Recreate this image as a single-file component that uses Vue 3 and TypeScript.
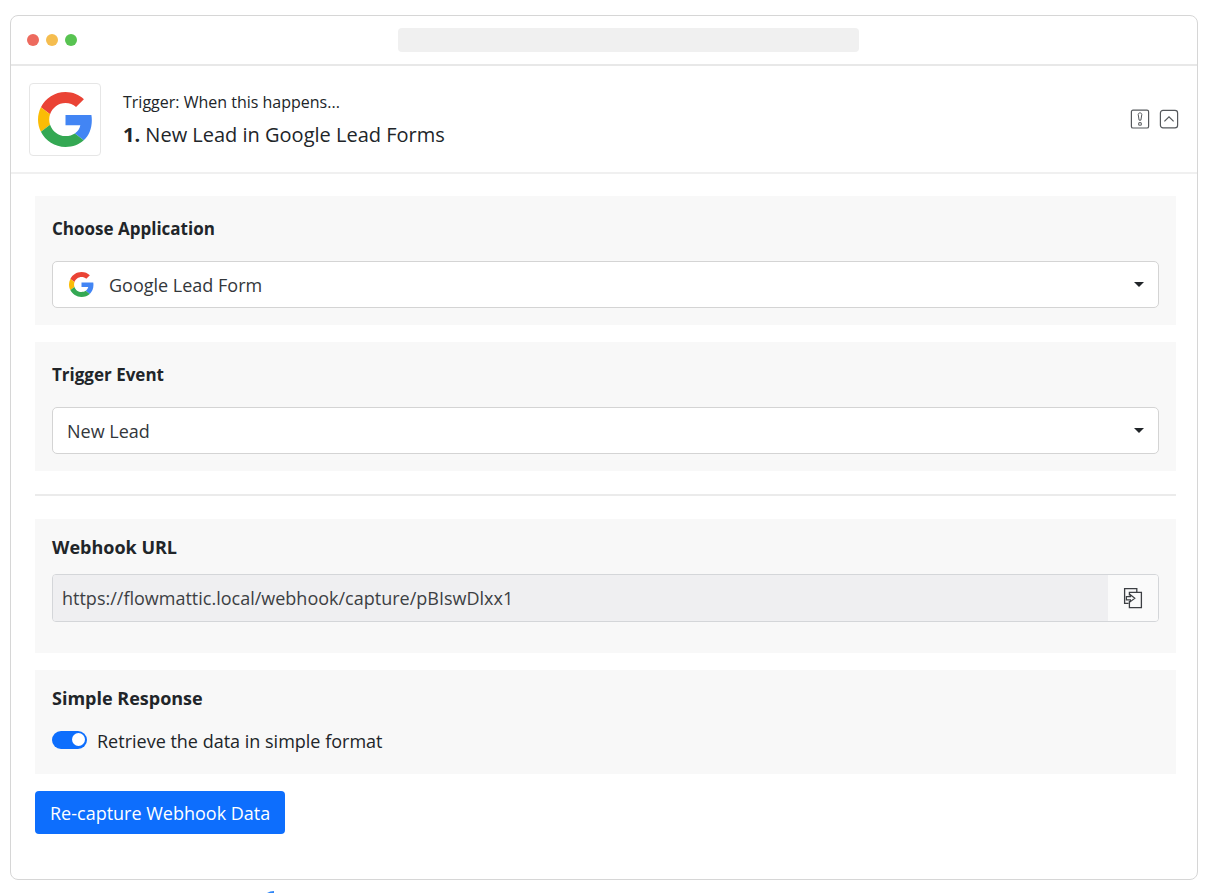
<script setup lang="ts">
import { ref } from 'vue'

const application = ref('Google Lead Form')
const triggerEvent = ref('New Lead')
const webhookUrl = ref('https://flowmattic.local/webhook/capture/pBIswDlxx1')
const simpleResponse = ref(true)
const lights = ['red', 'amber', 'green']
</script>

<template>
  <div class="page">
    <main class="window">
      <div class="titlebar">
        <div class="lights">
          <span v-for="light in lights" :key="light" class="light" :class="light"></span>
        </div>
        <div class="address"></div>
      </div>

      <header class="step">
        <div class="logo">
          <svg viewBox="0 0 48 48" aria-hidden="true">
            <path fill="#ea4335" d="M24 9.5c3.54 0 6.71 1.22 9.21 3.6l6.85-6.85C35.9 2.38 30.47 0 24 0 14.62 0 6.51 5.38 2.56 13.22l7.98 6.19C12.43 13.72 17.74 9.5 24 9.5z" />
            <path fill="#4285f4" d="M46.98 24.55c0-1.57-.15-3.09-.38-4.55H24v9.02h12.94c-.58 2.96-2.26 5.48-4.78 7.18l7.73 6c4.51-4.18 7.09-10.36 7.09-17.65z" />
            <path fill="#fbbc05" d="M10.53 28.59c-.48-1.45-.76-2.99-.76-4.59s.27-3.14.76-4.59l-7.98-6.19C.92 16.46 0 20.12 0 24c0 3.88.92 7.54 2.56 10.78l7.97-6.19z" />
            <path fill="#34a853" d="M24 48c6.48 0 11.93-2.13 15.89-5.81l-7.73-6c-2.15 1.45-4.92 2.3-8.16 2.3-6.26 0-11.57-4.22-13.47-9.91l-7.98 6.19C6.51 42.62 14.62 48 24 48z" />
          </svg>
        </div>
        <div class="heading">
          <p class="kicker">Trigger: When this happens...</p>
          <h1><b>1.</b> New Lead in Google Lead Forms</h1>
        </div>
        <div class="actions">
          <button type="button" class="icon-button" aria-label="Step details">
            <svg viewBox="0 0 20 20" width="20" height="20" fill="none" stroke="#55585c">
              <rect x="1.4" y="1.2" width="17.2" height="17.8" rx="1.6" stroke-width="1.2" />
              <path d="M8.2 5.4c0-2 3.6-2 3.6 0L10.9 11.2H9.1z" stroke-width="1" />
              <circle cx="10" cy="14.9" r="1.4" stroke-width="1.1" />
            </svg>
          </button>
          <button type="button" class="icon-button" aria-label="Collapse step">
            <svg viewBox="0 0 20 20" width="20" height="20" fill="none" stroke="#55585c">
              <rect x="1.4" y="1.4" width="17.2" height="17.4" rx="2.6" stroke-width="1.2" />
              <path d="M5.4 12.4 10 7.8l4.6 4.6" stroke-width="1.2" />
            </svg>
          </button>
        </div>
      </header>

      <div class="content">
        <section class="panel field">
          <label class="label" for="application">Choose Application</label>
          <div class="select-wrap">
            <svg class="select-logo" viewBox="0 0 48 48" aria-hidden="true">
              <path fill="#ea4335" d="M24 9.5c3.54 0 6.71 1.22 9.21 3.6l6.85-6.85C35.9 2.38 30.47 0 24 0 14.62 0 6.51 5.38 2.56 13.22l7.98 6.19C12.43 13.72 17.74 9.5 24 9.5z" />
              <path fill="#4285f4" d="M46.98 24.55c0-1.57-.15-3.09-.38-4.55H24v9.02h12.94c-.58 2.96-2.26 5.48-4.78 7.18l7.73 6c4.51-4.18 7.09-10.36 7.09-17.65z" />
              <path fill="#fbbc05" d="M10.53 28.59c-.48-1.45-.76-2.99-.76-4.59s.27-3.14.76-4.59l-7.98-6.19C.92 16.46 0 20.12 0 24c0 3.88.92 7.54 2.56 10.78l7.97-6.19z" />
              <path fill="#34a853" d="M24 48c6.48 0 11.93-2.13 15.89-5.81l-7.73-6c-2.15 1.45-4.92 2.3-8.16 2.3-6.26 0-11.57-4.22-13.47-9.91l-7.98 6.19C6.51 42.62 14.62 48 24 48z" />
            </svg>
            <select id="application" v-model="application" class="with-logo">
              <option>Google Lead Form</option>
            </select>
            <span class="caret"></span>
          </div>
        </section>

        <section class="panel field">
          <label class="label" for="trigger-event">Trigger Event</label>
          <div class="select-wrap">
            <select id="trigger-event" v-model="triggerEvent">
              <option>New Lead</option>
            </select>
            <span class="caret"></span>
          </div>
        </section>

        <hr />

        <section class="panel webhook">
          <label class="label" for="webhook-url">Webhook URL</label>
          <div class="input-group">
            <input id="webhook-url" v-model="webhookUrl" type="text" readonly />
            <button type="button" class="copy" aria-label="Copy webhook URL">
              <svg viewBox="0 0 20 22" width="20" height="22" fill="none" stroke="#3c3f43" stroke-width="1.3">
                <path d="M5.6 16.4H1.6V1.6h12.2v4" />
                <path d="M6.4 14v6.6h12V5.4h-12v3" />
                <path d="M3.4 9.6h4V7.8l4.4 3.4-4.4 3.4v-1.8h-4z" stroke-width="1.2" />
              </svg>
            </button>
          </div>
        </section>

        <section class="panel response">
          <h2 class="label">Simple Response</h2>
          <div class="switch-row">
            <input id="simple" v-model="simpleResponse" type="checkbox" role="switch" class="switch" />
            <label for="simple">Retrieve the data in simple format</label>
          </div>
        </section>

        <button type="button" class="primary">Re-capture Webhook Data</button>
      </div>
    </main>
    <svg class="accent" viewBox="0 0 10 2" width="10" height="2" aria-hidden="true">
      <path d="M2 2Q5 0 9 0V2z" fill="#2f86f6" />
    </svg>
  </div>
</template>

<style>
body {
  margin: 0;
  background: #fff;
}
</style>

<style scoped>
* {
  box-sizing: border-box;
}
.page {
  padding: 15px 11px 0 10px;
  font-family: 'Open Sans', 'Noto Sans', sans-serif;
  font-size: 18px;
  line-height: 24px;
  color: #212529;
}
.window {
  border: 1px solid #d6d6d6;
  border-radius: 8px;
  padding-bottom: 45px;
}
.titlebar {
  display: grid;
  grid-template-columns: 15fr 461px 13fr;
  align-items: center;
  height: 50px;
  padding: 0 16px;
  border-bottom: 2px solid #e8e8e8;
}
.lights {
  display: flex;
  gap: 7px;
}
.light {
  width: 12px;
  height: 12px;
  border-radius: 50%;
}
.red {
  background: #ed6a5e;
}
.amber {
  background: #f5bd4f;
}
.green {
  background: #58c351;
}
.address {
  height: 24px;
  border-radius: 4px;
  background: #f0f0f0;
}
.step {
  display: flex;
  align-items: center;
  height: 108px;
  padding: 0 18px;
  border-bottom: 2px solid #f0f0f0;
}
.logo {
  display: grid;
  place-items: center;
  width: 72px;
  height: 73px;
  border: 1px solid #e6e6e6;
  border-radius: 4px;
}
.logo svg {
  width: 55px;
  height: 55px;
}
.heading {
  flex: 1;
  margin-left: 22px;
}
.kicker {
  margin: 0 0 7px;
  font-size: 16px;
}
h1 {
  margin: 0;
  font-size: 20px;
  line-height: 28px;
  font-weight: 400;
}
.actions {
  display: flex;
  gap: 9px;
}
.icon-button {
  display: block;
  padding: 0;
  border: 0;
  background: none;
}
.icon-button svg {
  display: block;
}
.content {
  padding: 22px 21px 0 24px;
}
.panel {
  margin-bottom: 17px;
  padding: 17px;
  background: #f8f8f8;
}
.label {
  display: block;
  margin: 0;
  font-size: 18px;
  line-height: 24px;
  font-weight: 700;
}
.field {
  padding-top: 21px;
}
.field .label {
  margin-bottom: 20px;
  font-size: 17px;
}
.select-wrap {
  position: relative;
}
select {
  display: block;
  appearance: none;
  width: 100%;
  height: 47px;
  padding: 0 40px 0 14px;
  border: 1px solid #d4d4d4;
  border-radius: 5px;
  background: #fff;
  font: inherit;
  color: #33373b;
}
select.with-logo {
  padding-left: 56px;
}
.select-logo {
  position: absolute;
  left: 17px;
  top: 11px;
  width: 25px;
  height: 25px;
}
.caret {
  position: absolute;
  right: 15px;
  top: 21px;
  border: 5px solid transparent;
  border-top-color: #212529;
  border-bottom: 0;
  pointer-events: none;
}
hr {
  height: 2px;
  margin: 23px 0;
  border: 0;
  background: #ebebeb;
}
.webhook {
  padding: 16px 17px 31px;
}
.input-group {
  display: flex;
  height: 48px;
  margin-top: 15px;
  border: 1px solid #d4d6d9;
  border-radius: 4px;
  overflow: hidden;
}
.input-group input {
  flex: 1;
  min-width: 0;
  padding: 0 9px;
  border: 0;
  background: #efeff1;
  font: inherit;
  color: #3c4043;
}
.copy {
  display: grid;
  place-items: center;
  width: 50px;
  padding: 0;
  border: 0;
  background: #fafafa;
}
.response {
  padding: 16px 17px 21px;
}
.switch-row {
  display: flex;
  margin-top: 19px;
}
.switch-row label {
  margin-left: 10px;
}
.switch {
  appearance: none;
  width: 35px;
  height: 18px;
  margin: 2px 0 0;
  border-radius: 9px;
  background: #b8bcc2;
}
.switch::before {
  content: '';
  display: block;
  width: 13px;
  height: 13px;
  margin: 2px 3px;
  border-radius: 50%;
  background: #fff;
}
.switch:checked {
  background: #0d6efd;
}
.switch:checked::before {
  margin-left: 20px;
}
.primary {
  display: block;
  height: 43px;
  padding: 0 15px;
  border: 0;
  border-radius: 4px;
  background: #0d6efd;
  font: inherit;
  color: #fff;
}
.accent {
  display: block;
  margin: 11px 0 0 255px;
}
</style>
